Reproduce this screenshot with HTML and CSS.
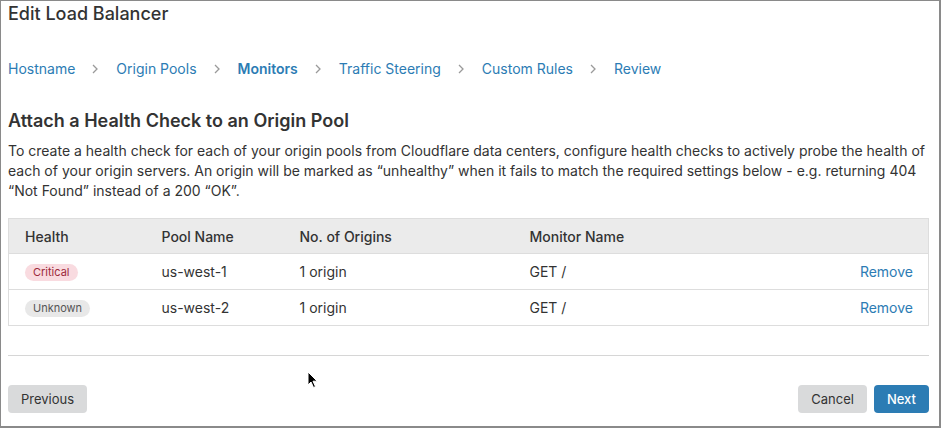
FILE: index.html
```html
<!DOCTYPE html>
<html lang="en">
<head>
<meta charset="utf-8">
<title>Edit Load Balancer</title>
<link rel="stylesheet" href="styles.css">
</head>
<body>
<div class="frame">
  <h1 class="title">Edit Load Balancer</h1>
  <nav class="steps">
    <a class="step">Hostname</a><svg class="chev" width="6" height="10" viewBox="0 0 6 10"><path d="M1 1 L5 5 L1 9" fill="none" stroke="#9a9a9a" stroke-width="1.3"/></svg>
    <a class="step">Origin Pools</a><svg class="chev" width="6" height="10" viewBox="0 0 6 10"><path d="M1 1 L5 5 L1 9" fill="none" stroke="#9a9a9a" stroke-width="1.3"/></svg>
    <a class="step active">Monitors</a><svg class="chev" width="6" height="10" viewBox="0 0 6 10"><path d="M1 1 L5 5 L1 9" fill="none" stroke="#9a9a9a" stroke-width="1.3"/></svg>
    <a class="step">Traffic Steering</a><svg class="chev" width="6" height="10" viewBox="0 0 6 10"><path d="M1 1 L5 5 L1 9" fill="none" stroke="#9a9a9a" stroke-width="1.3"/></svg>
    <a class="step">Custom Rules</a><svg class="chev" width="6" height="10" viewBox="0 0 6 10"><path d="M1 1 L5 5 L1 9" fill="none" stroke="#9a9a9a" stroke-width="1.3"/></svg>
    <a class="step">Review</a>
  </nav>
  <h2 class="heading">Attach a Health Check to an Origin Pool</h2>
  <p class="desc">To create a health check for each of your origin pools from Cloudflare data centers, configure health checks to actively probe the health of each of your origin servers. An origin will be marked as “unhealthy” when it fails to match the required settings below - e.g. returning 404 “Not Found” instead of a 200 “OK”.</p>
  <table class="grid">
    <colgroup>
      <col class="c1"><col class="c2"><col class="c3"><col class="c4"><col>
    </colgroup>
    <thead>
      <tr><th>Health</th><th>Pool Name</th><th>No. of Origins</th><th>Monitor Name</th><th></th></tr>
    </thead>
    <tbody>
      <tr><td><span class="badge critical">Critical</span></td><td>us-west-1</td><td>1 origin</td><td>GET /</td><td class="act"><a>Remove</a></td></tr>
      <tr><td><span class="badge unknown">Unknown</span></td><td>us-west-2</td><td>1 origin</td><td>GET /</td><td class="act"><a>Remove</a></td></tr>
    </tbody>
  </table>
  <hr class="sep">
  <div class="footer">
    <button class="btn">Previous</button>
    <div class="right">
      <button class="btn">Cancel</button>
      <button class="btn primary">Next</button>
    </div>
  </div>
  <svg class="cursor" width="12" height="18" viewBox="0 0 12 18"><path d="M1 1 L1 14 L4 11 L6.5 16.5 L8.5 15.6 L6 10.2 L10.2 10.2 Z" fill="#000" stroke="#fff" stroke-width="1"/></svg>
</div>
</body>
</html>
```
FILE: styles.css
```css
* { box-sizing: border-box; }
html, body { margin: 0; padding: 0; background: #fff; }
body {
  font-family: Inter, "Noto Sans", "Liberation Sans", sans-serif;
  color: #333;
}
.frame {
  position: relative;
  width: 941px;
  height: 428px;
  border-top: 1px solid #8a8a8a;
  border-left: 1px solid #8a8a8a;
  border-right: 2px solid #8a8a8a;
  border-bottom: 2px solid #8a8a8a;
  padding: 2px 10px 0 7px;
}
.title {
  margin: 0;
  font-size: 18px;
  line-height: 22px;
  font-weight: 500;
  color: #333;
}
.steps {
  display: flex;
  align-items: center;
  margin-top: 34px;
  height: 20px;
  font-size: 14px;
  line-height: 20px;
}
.step { color: #2c7cb4; }
.step.active { font-weight: 600; }
.chev {
  display: block;
  margin: 0 18px 0 17px;
}
.heading {
  margin: 31px 0 0;
  font-size: 18px;
  line-height: 22px;
  font-weight: 600;
  color: #333;
}
.desc {
  margin: 9px 0 0;
  font-size: 14px;
  line-height: 20px;
  color: #333;
}
.grid {
  margin-top: 17px;
  width: 921px;
  border-collapse: collapse;
  border: 1px solid #ddd;
  font-size: 14px;
  table-layout: fixed;
}
.c1 { width: 137px; }
.c2 { width: 138px; }
.c3 { width: 230px; }
.c4 { width: 240px; }
.grid th {
  background: #ebebeb;
  height: 35px;
  text-align: left;
  font-weight: 500;
  padding: 0 0 0 16px;
  color: #333;
}
.grid td {
  height: 36px;
  padding: 0 0 0 16px;
  border-top: 1px solid #ddd;
  color: #333;
}
.grid td.act { text-align: right; padding-right: 15px; }
.act a { color: #2c7cb4; }
.badge {
  display: inline-block;
  font-size: 11px;
  line-height: 17px;
  padding: 0 8px;
  border-radius: 9px;
}
.critical { background: #f9dbe0; color: #9c2a3c; }
.unknown { background: #e8e8e8; color: #555; }
.sep {
  margin: 29px 0 0;
  border: 0;
  border-top: 1px solid #d6d6d6;
  width: 921px;
}
.footer {
  display: flex;
  justify-content: space-between;
  width: 921px;
  margin-top: 29px;
}
.right { display: flex; gap: 7px; }
.btn {
  font-family: inherit;
  height: 28px;
  padding: 0 13px;
  border: 0;
  border-radius: 4px;
  background: #d9dadb;
  color: #333;
  font-size: 13px;
}
.btn.primary { background: #2c7cb4; color: #fff; font-weight: 500; }
.cursor {
  position: absolute;
  left: 306px;
  top: 370px;
}
```
